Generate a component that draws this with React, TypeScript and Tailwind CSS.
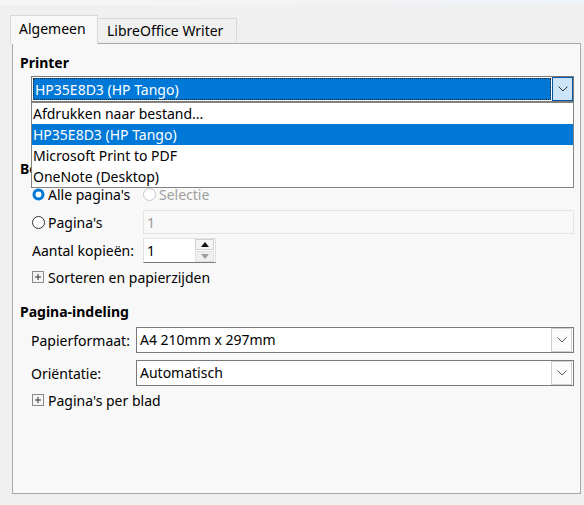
import React from "react";

const font = { fontFamily: '"Noto Sans", "Open Sans", sans-serif' };

function Chevron({ color = "#5a5a5a" }: { color?: string }) {
  return (
    <svg width="10" height="6" viewBox="0 0 10 6">
      <path d="M0.5 0.5 L5 5 L9.5 0.5" fill="none" stroke={color} strokeWidth="1" />
    </svg>
  );
}

function PlusBox() {
  return (
    <svg width="12" height="12" viewBox="0 0 12 12" className="shrink-0">
      <rect x="0.5" y="0.5" width="11" height="11" fill="#f4f4f4" stroke="#8a8a8a" />
      <path d="M3 6 H9 M6 3 V9" stroke="#333" strokeWidth="1" />
    </svg>
  );
}

function Radio({ checked, disabled }: { checked?: boolean; disabled?: boolean }) {
  if (checked) {
    return (
      <svg width="13" height="13" viewBox="0 0 13 13" className="shrink-0">
        <circle cx="6.5" cy="6.5" r="6" fill="#0078d7" />
        <circle cx="6.5" cy="6.5" r="3" fill="#ffffff" />
      </svg>
    );
  }
  return (
    <svg width="13" height="13" viewBox="0 0 13 13" className="shrink-0">
      <circle cx="6.5" cy="6.5" r="6" fill="#ffffff" stroke={disabled ? "#c6c6c6" : "#333333"} strokeWidth="1" />
    </svg>
  );
}

function Combo({ value }: { value: string }) {
  return (
    <div className="flex-1 h-[26px] border border-[#7a7a7a] bg-white flex items-center">
      <span className="flex-1 pl-[3px] text-[14px] text-black leading-none">{value}</span>
      <div className="w-[21px] h-[24px] mr-px border border-[#cfcfcf] bg-[#fbfbfb] flex items-center justify-center">
        <Chevron />
      </div>
    </div>
  );
}

export default function App() {
  const items = ["Afdrukken naar bestand...", "HP35E8D3 (HP Tango)", "Microsoft Print to PDF", "OneNote (Desktop)"];
  return (
    <div className="w-[584px] h-[505px] bg-[#f0f0f0] overflow-hidden relative text-[14px] text-black" style={font}>
      <div className="h-[5px] bg-gradient-to-r from-[#f6f6f6] via-[#f4f4f4] to-[#eef3fa]" />
      <div className="flex items-end pl-[10px] h-[38px]">
        <div className="h-[29px] w-[88px] border border-b-0 border-[#d9d9d9] bg-[#f8f8f8] pt-[3px] leading-[20px] pl-[8px] relative z-10 -mb-px">
          Algemeen
        </div>
        <div className="h-[25px] w-[139px] border border-l-0 border-b-0 border-[#d9d9d9] bg-[#f0f0f0] pt-[2px] leading-[20px] pl-[9px]">
          LibreOffice Writer
        </div>
      </div>
      <div className="ml-[12px] mr-[3px] h-[451px] border border-[#a9a9a9] bg-[#f8f8f8] relative">
        <div className="pl-[7px] pr-[6px]">
          <div className="h-[32px] pt-[9px] font-bold leading-[20px]">Printer</div>
          <div className="pl-[11px] relative">
            <div className="h-[26px] border border-[#7a7a7a] bg-white flex items-stretch">
              <div className="flex-1 m-px bg-[#0078d7] border border-dotted border-[#222] flex items-center pl-[1px] text-white">
                HP35E8D3 (HP Tango)
              </div>
              <div className="w-[21px] border border-[#0054a6] bg-[#cce4f7] flex items-center justify-center">
                <Chevron color="#333" />
              </div>
            </div>
            <div className="absolute left-[11px] right-0 top-[26px] border border-[#838383] bg-white z-20">
              {items.map((it, i) => (
                <div
                  key={it}
                  className={
                    "h-[21px] flex items-center pl-[1px] " + (i === 1 ? "bg-[#0078d7] text-white" : "text-black")
                  }
                >
                  {it}
                </div>
              ))}
            </div>
          </div>
          <div className="h-[24px] mt-[55px] font-bold leading-[24px]">Bereik en kopieën</div>
          <div className="pl-[12px]">
            <div className="h-[26px] flex items-center">
              <Radio checked />
              <span className="ml-[3px] w-[95px]">Alle pagina's</span>
              <Radio disabled />
              <span className="ml-[3px] text-[#a0a0a0]">Selectie</span>
            </div>
            <div className="h-[30px] flex items-center">
              <Radio />
              <span className="ml-[3px] w-[95px]">Pagina's</span>
              <div className="flex-1 h-[24px] border border-[#e3e3e3] bg-[#f8f8f8] flex items-center pl-[3px] text-[#9a9a9a]">1</div>
            </div>
            <div className="h-[26px] flex items-center">
              <span className="w-[111px]">Aantal kopieën:</span>
              <div className="w-[73px] h-[25px] border border-[#e0e0e0] border-b-[#7a7a7a] bg-white flex items-center">
                <span className="flex-1 pl-[3px]">1</span>
                <div className="w-[19px] h-[23px] flex flex-col gap-px mr-px">
                  <div className="flex-1 bg-[#f4f4f4] border border-[#d0d0d0] flex items-center justify-center">
                    <svg width="8" height="5" viewBox="0 0 8 5"><path d="M0 5 L4 0 L8 5 Z" fill="#111" /></svg>
                  </div>
                  <div className="flex-1 bg-[#f0f0f0] border border-[#e0e0e0] flex items-center justify-center">
                    <svg width="8" height="5" viewBox="0 0 8 5"><path d="M0 0 L4 5 L8 0 Z" fill="#a0a0a0" /></svg>
                  </div>
                </div>
              </div>
            </div>
            <div className="h-[28px] flex items-center">
              <PlusBox />
              <span className="ml-[4px]">Sorteren en papierzijden</span>
            </div>
          </div>
          <div className="h-[24px] mt-[9px] font-bold leading-[24px]">Pagina-indeling</div>
          <div className="pl-[11px] flex flex-col gap-[7px] mt-[3px]">
            <div className="flex items-center">
              <span className="w-[105px]">Papierformaat:</span>
              <Combo value="A4 210mm x 297mm" />
            </div>
            <div className="flex items-center">
              <span className="w-[105px]">Oriëntatie:</span>
              <Combo value="Automatisch" />
            </div>
          </div>
          <div className="pl-[12px] h-[28px] flex items-center">
            <PlusBox />
            <span className="ml-[4px]">Pagina's per blad</span>
          </div>
        </div>
      </div>
    </div>
  );
}
